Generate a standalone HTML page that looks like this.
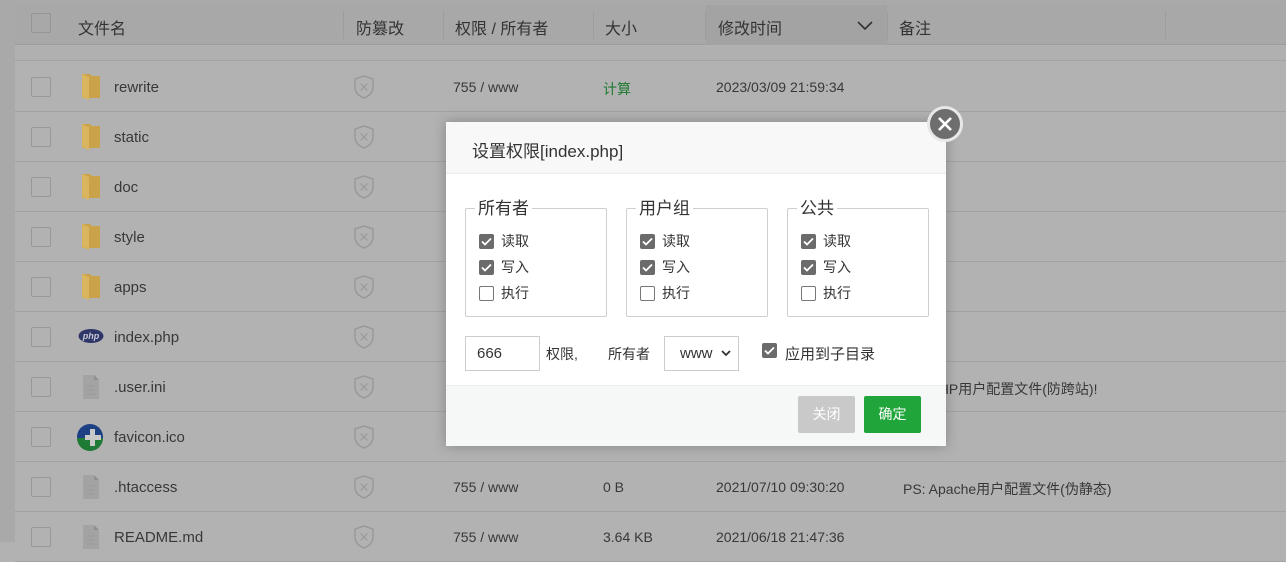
<!DOCTYPE html>
<html><head><meta charset="utf-8"><style>
*{box-sizing:border-box;margin:0;padding:0}
body{width:1286px;height:542px;overflow:hidden;background:#b2b2b2;font-family:"Liberation Sans","Noto Sans CJK SC",sans-serif;position:relative;color:#383838}
.top{position:absolute;left:0;top:0;width:1286px;height:5px;background:#a9a9a9}
.left{position:absolute;left:0;top:0;width:15px;height:542px;background:#a9a9a9}
.hdr{position:absolute;left:15px;top:5px;width:1271px;height:40px;background:#a8a8a8;border-bottom:1px solid #9c9c9c;font-size:16px;color:#333}
.hdr span{position:absolute;top:10px}
.sep{position:absolute;top:6px;width:1px;height:28px;background:#9d9d9d}
.sort{position:absolute;left:691px;top:0;width:181px;height:40px;background:#a3a3a3}
.strip{position:absolute;left:15px;top:46px;width:1271px;height:15px;background:#b0b0b0;border-bottom:1px solid #a2a2a2}
.row{position:absolute;left:15px;width:1271px;height:50px;border-bottom:1px solid #a2a2a2;font-size:15px}
.row>*{position:absolute}
.cb{position:absolute;left:16px;top:15px;width:20px;height:20px;border:1px solid #989898;border-radius:2px;background:#b2b2b2}
.hdr .cb{top:8px;border-color:#959595;background:#a8a8a8}
.nm{left:99px;top:17px}
.pm{left:438px;top:17px;font-size:14px}
.sz{left:588px;top:17px;font-size:14px}
.tm{left:701px;top:17px;font-size:14px}
.rm{left:888px;top:17px;font-size:14px}
.sh{left:337px;top:12px}
.ic{left:65px;top:11px}
.modal{position:absolute;left:446px;top:122px;width:500px;height:324px;background:#fff;box-shadow:0 0 12px rgba(0,0,0,.25)}
.mh{height:52px;background:#f8f8f8;border-bottom:1px solid #ececec;font-size:17px;color:#333;padding:15px 0 0 26px}
.mf{position:absolute;left:0;top:263px;width:500px;height:61px;background:#f6f7f7;border-top:1px solid #ececec}
.fs{position:absolute;top:86px;width:142px;height:109px;border:1px solid #cfcfcf;border-radius:2px}
.lg{position:absolute;left:9px;top:-9px;background:#fff;padding:0 3px;font-size:17px;line-height:18px;color:#333}
.ck{position:absolute;left:13px;width:15px;height:15px;border-radius:2px}
.on{background:#6b6b6b}
.off{border:1px solid #777;background:#fff}
.lb{position:absolute;left:35px;font-size:14px;color:#333;line-height:16px}
.btn{position:absolute;top:274px;width:57px;height:37px;border-radius:2px;color:#fff;font-size:14px;text-align:center;line-height:37px}
</style></head><body>
<div class="top"></div>
<div class="left"></div>
<div class="hdr">
<div class="sort"></div>
<div class="cb"></div>
<span style="left:63px">文件名</span>
<div class="sep" style="left:328px"></div><span style="left:341px">防篡改</span>
<div class="sep" style="left:428px"></div><span style="left:440px">权限 / 所有者</span>
<div class="sep" style="left:578px"></div><span style="left:590px">大小</span>
<div class="sep" style="left:690px"></div><span style="left:703px">修改时间</span>
<svg style="position:absolute;left:842px;top:16px" width="16" height="10"><path d="M1 1l7 7 7-7" stroke="#333" stroke-width="1.6" fill="none"/></svg>
<div class="sep" style="left:872px"></div><span style="left:884px">备注</span>
<div class="sep" style="left:1150px"></div>
</div>
<div class="strip"></div>
<div id="rows"></div>
<script>
var fold='<svg class="ic" width="22" height="28" viewBox="0 0 22 28"><path d="M2 1h8l2 2h8v22H2z" fill="#c9a24a"/><path d="M2 1l7 3v23l-7-3z" fill="#d8b55e"/></svg>';
var file='<svg class="ic" width="22" height="28" viewBox="0 0 22 28"><path d="M3 2h11l5 5v19H3z" fill="#a3a3a3"/><path d="M14 2v5h5" fill="#8f8f8f"/><path d="M7 13h8M7 17h8M7 21h8" stroke="#999" /></svg>';
var php='<svg class="ic" style="top:16px;left:63px" width="26" height="16" viewBox="0 0 26 16"><ellipse cx="13" cy="8" rx="12.5" ry="7" fill="#2f3769"/><text x="13" y="11" text-anchor="middle" font-size="9" font-style="italic" font-weight="bold" fill="#c8c8d8" font-family="Liberation Sans">php</text></svg>';
var fav='<svg class="ic" style="left:61px;top:11px" width="28" height="28" viewBox="0 0 28 28"><circle cx="14" cy="14" r="13" fill="#1d3f84"/><path d="M1 15a13 13 0 0 0 26 0z" fill="#1e7a35"/><path d="M14 6h5v6h6v5h-6v6h-5v-6H9v-5h5z" fill="#c8c8c8"/></svg>';
var sh='<svg class="sh" width="24" height="26" viewBox="0 0 24 26"><path d="M12 2l9 3v8c0 6-4 9-9 11C7 22 3 19 3 13V5z" fill="none" stroke="#999" stroke-width="1.5"/><path d="M8.5 9.5l7 7M15.5 9.5l-7 7" stroke="#999" stroke-width="1.2"/></svg>';
var R=[[fold,'rewrite','755 / www','<span style="color:#1f7a30">计算</span>','2023/03/09 21:59:34',''],
[fold,'static','755 / www','计算','2023/03/09 21:59:34',''],
[fold,'doc','755 / www','计算','2023/03/09 21:59:34',''],
[fold,'style','755 / www','计算','2023/03/09 21:59:34',''],
[fold,'apps','755 / www','计算','2023/03/09 21:59:34',''],
[php,'index.php','755 / www','1.2 KB','2023/03/09 21:59:34',''],
[file,'.user.ini','644 / root','0 B','2023/03/09 21:59:34','PS: PHP用户配置文件(防跨站)!'],
[fav,'favicon.ico','755 / www','4 KB','2023/03/09 21:59:34',''],
[file,'.htaccess','755 / www','0 B','2021/07/10 09:30:20','PS: Apache用户配置文件(伪静态)'],
[file,'README.md','755 / www','3.64 KB','2021/06/18 21:47:36','']];
var h='';R.forEach(function(r,i){h+='<div class="row" style="top:'+(62+50*i)+'px"><div class="cb"></div>'+r[0]+'<span class="nm">'+r[1]+'</span>'+sh+'<span class="pm">'+r[2]+'</span><span class="sz">'+r[3]+'</span><span class="tm">'+r[4]+'</span><span class="rm">'+r[5]+'</span></div>'});
document.getElementById('rows').innerHTML=h;
</script>
<div class="modal">
<div class="mh">设置权限[index.php]</div>
<div id="fss"></div>
<div style="position:absolute;left:19px;top:214px;width:75px;height:35px;border:1px solid #ccc;font-size:15px;padding:8px 0 0 11px;color:#333">666</div>
<span style="position:absolute;left:100px;top:222px;font-size:14px;color:#333">权限,</span>
<span style="position:absolute;left:162px;top:222px;font-size:14px;color:#333">所有者</span>
<div style="position:absolute;left:218px;top:214px;width:75px;height:35px;border:1px solid #ccc;font-size:15px;padding:8px 0 0 15px;color:#333">www</div>
<svg style="position:absolute;left:275px;top:228px" width="10" height="7"><path d="M1 1l4 4 4-4" stroke="#333" stroke-width="1.8" fill="none"/></svg>
<div class="ck on" style="left:316px;top:221px"></div>
<svg style="position:absolute;left:318px;top:224px" width="11" height="9"><path d="M1 4.5l3 3 6-6" stroke="#fff" stroke-width="1.8" fill="none"/></svg>
<span style="position:absolute;left:339px;top:221px;font-size:15px;color:#333">应用到子目录</span>
<div class="mf"></div>
<div class="btn" style="left:352px;background:#c9c9c9">关闭</div>
<div class="btn" style="left:418px;background:#20a53a">确定</div>
</div>
<div style="position:absolute;left:927px;top:106px;width:36px;height:36px;border-radius:50%;background:#6e6e6e;border:3px solid #e8e8e8"></div>
<svg style="position:absolute;left:937px;top:116px" width="16" height="16"><path d="M2 2l12 12M14 2L2 14" stroke="#fff" stroke-width="2.6"/></svg>
<script>
var L=['所有者','用户组','公共'],X=[19,180,341],s='';
for(var i=0;i<3;i++){s+='<div class="fs" style="left:'+X[i]+'px"><span class="lg">'+L[i]+'</span>';
[['读取',1,24],['写入',1,50],['执行',0,76]].forEach(function(c){s+='<div class="ck '+(c[1]?'on':'off')+'" style="top:'+(c[2]+1)+'px"></div>'+(c[1]?'<svg style="position:absolute;left:15px;top:'+(c[2]+4)+'px" width="11" height="9"><path d="M1 4.5l3 3 6-6" stroke="#fff" stroke-width="1.8" fill="none"/></svg>':'')+'<span class="lb" style="top:'+c[2]+'px">'+c[0]+'</span>'});
s+='</div>'}
document.getElementById('fss').innerHTML=s;
</script>
</body></html>
